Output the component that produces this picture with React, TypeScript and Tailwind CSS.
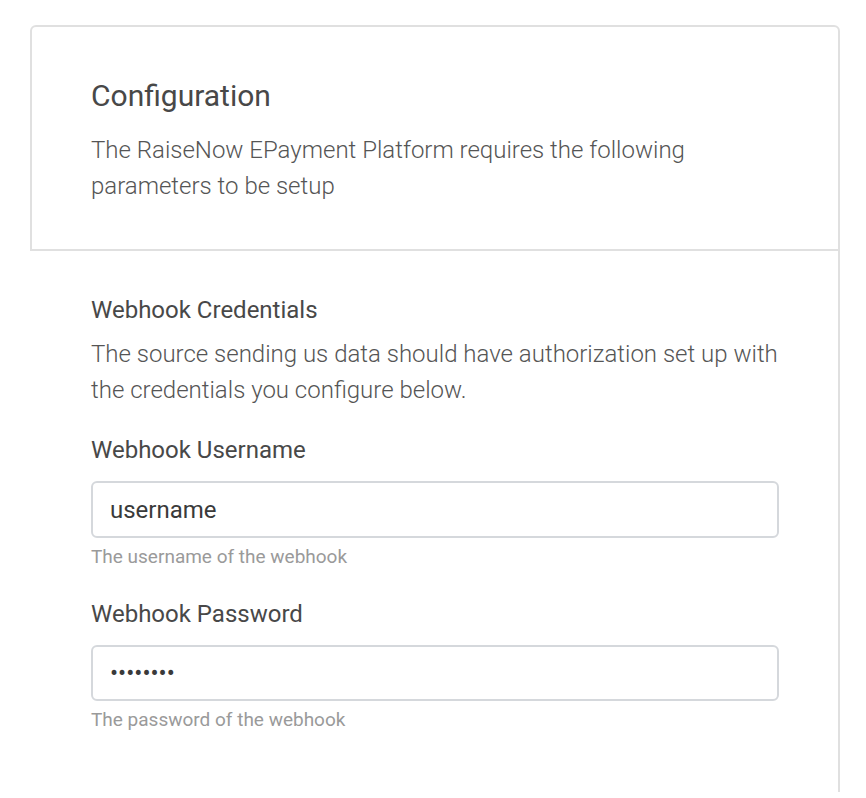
export default function App() {
  return (
    <div className="min-h-[798px] bg-white pt-[25px] pr-[26px]" style={{ fontFamily: "Roboto, 'Liberation Sans', sans-serif" }}>
      {/* Header */}
      <div className="ml-[30px] border-2 border-[#e0e0e0] rounded-t-[6px] px-[59px] pt-[53px] pb-[45px]">
        <h1 className="text-[30px] leading-[32px] text-[#484848] font-normal">Configuration</h1>
        <p className="mt-[20px] text-[24px] leading-[36px] font-light text-[#555]">
          The RaiseNow EPayment Platform requires the following parameters to be setup
        </p>
      </div>

      {/* Body */}
      <div className="border-r-2 border-[#e0e0e0] pl-[91px] pr-[59px] pt-[44px] pb-[60px]">
        <h2 className="text-[24px] leading-[30px] text-[#484848] font-normal">Webhook Credentials</h2>
        <p className="mt-[11px] text-[24px] leading-[36px] font-light text-[#555]">
          The source sending us data should have authorization set up with the credentials you configure below.
        </p>

        <label className="block mt-[27px] text-[24px] leading-[30px] text-[#484848]">Webhook Username</label>
        <input
          type="text"
          defaultValue="username"
          className="mt-[16px] w-full h-[57px] border-2 border-[#d5d8dc] rounded-[6px] px-[17px] text-[24px] text-[#3a3a3a] outline-none"
        />
        <p className="mt-[7px] text-[19px] leading-[24px] font-normal text-[#9a9a9a]">The username of the webhook</p>

        <label className="block mt-[30px] text-[24px] leading-[30px] text-[#484848]">Webhook Password</label>
        <input
          type="password"
          defaultValue="password"
          className="mt-[16px] w-full h-[56px] border-2 border-[#d5d8dc] rounded-[6px] px-[17px] text-[24px] text-[#3a3a3a] outline-none"
        />
        <p className="mt-[7px] text-[19px] leading-[24px] font-normal text-[#9a9a9a]">The password of the webhook</p>
      </div>
    </div>
  )
}
